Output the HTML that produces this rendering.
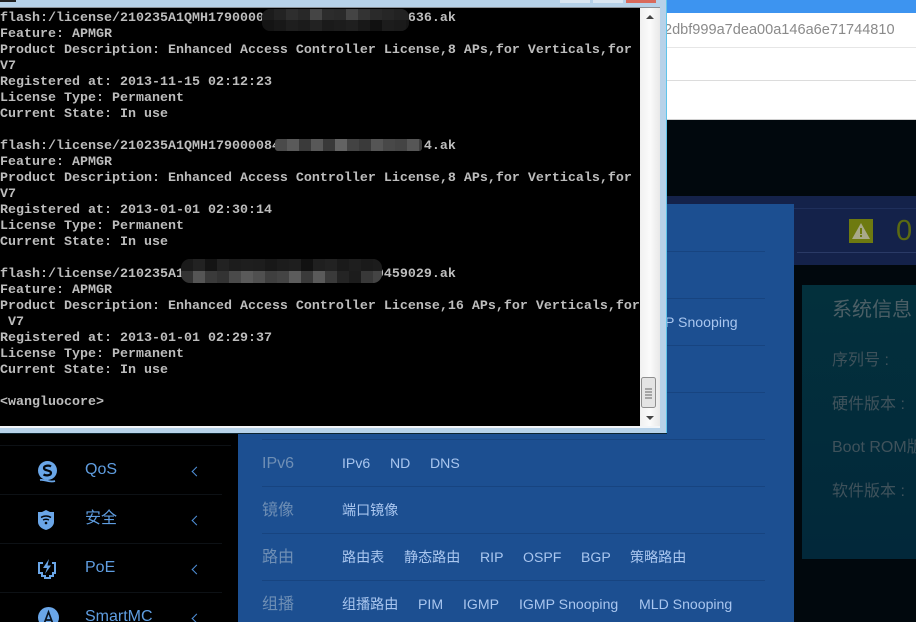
<!DOCTYPE html>
<html><head><meta charset="utf-8"><style>
html,body{margin:0;padding:0;width:916px;height:622px;overflow:hidden;background:#000}
body{position:relative;font-family:"Liberation Sans","Noto Sans CJK SC",sans-serif}
.a{position:absolute}
.t{position:absolute;white-space:pre;line-height:16px;height:16px}
#term .t{left:0;font:bold 13.33px/16px "Liberation Mono",monospace;color:#bdbdbd;letter-spacing:0}
.ln{position:absolute;left:262px;width:503px;height:1px;background:#174480}
.h{position:absolute;left:262px;font-size:16px;color:#6f8fb5;line-height:20px;white-space:pre}
.l{position:absolute;font-size:14.1px;color:#a9c6ef;line-height:20px;white-space:pre}
.m{position:absolute;left:85px;font-size:16px;color:#5f9de0;line-height:20px;white-space:pre}
.c{position:absolute;left:193px;width:6px;height:6px;border-left:1.5px solid #4f8fd8;border-bottom:1.5px solid #4f8fd8;transform:rotate(45deg)}
.s{position:absolute;left:0;width:222px;height:1px;background:#0d1115}
.g{position:absolute;left:832px;font-size:16px;color:#3f525b;line-height:20px;white-space:pre}
.r{position:absolute;display:flex;height:11px}
.r i{display:block;width:12px;height:11px;flex:none}
</style></head><body>

<!-- page behind -->
<div class="a" style="left:667px;top:0;width:249px;height:13px;background:#3d94f0"></div>
<div class="a" style="left:667px;top:13px;width:249px;height:107px;background:#fff"></div>
<div class="a" style="left:667px;top:47px;width:249px;height:1px;background:#e6e6e6"></div>
<div class="a" style="left:667px;top:80px;width:249px;height:1px;background:#dcdcdc"></div>
<div class="a" style="left:667px;top:119px;width:249px;height:1px;background:#d0d0d0"></div>
<div class="a" style="left:664px;top:20px;width:252px;height:20px;overflow:hidden;font-size:14.55px;line-height:20px;color:#8a8a8a;white-space:pre">2dbf999a7dea00a146a6e71744810</div>
<div class="a" style="left:667px;top:120px;width:249px;height:502px;background:#01080d"></div>

<!-- header band -->
<div class="a" style="left:667px;top:196px;width:249px;height:69px;background:#14224a"></div>
<div class="a" style="left:794px;top:208px;width:122px;height:1px;background:#1f2f5b"></div>
<div class="a" style="left:797px;top:252px;width:119px;height:1px;background:#2a3a66"></div>
<div class="a" style="left:849px;top:219px;width:24px;height:24px;background:#6e7a10"></div>
<svg class="a" style="left:849px;top:219px" width="24" height="24" viewBox="0 0 24 24"><path d="M12 4 L21 20 L3 20 Z" fill="#a9a98a"/><rect x="11" y="9" width="2" height="6" fill="#6e7a10"/><rect x="11" y="16" width="2" height="2" fill="#6e7a10"/></svg>
<div class="a" style="left:896px;top:214px;font-size:29px;line-height:34px;color:#5b6a12">0</div>

<!-- blue panel -->
<div class="a" style="left:238px;top:204px;width:556px;height:418px;background:#1c4f91"></div>
<div class="ln" style="top:251px"></div>
<div class="ln" style="top:298px"></div>
<div class="ln" style="top:345px"></div>
<div class="ln" style="top:392px"></div>
<div class="ln" style="top:439px"></div>
<div class="ln" style="top:486px"></div>
<div class="ln" style="top:533px"></div>
<div class="ln" style="top:580px"></div>
<div class="l" style="left:665px;top:312px">P Snooping</div>
<div class="h" style="top:454px">IPv6</div>
<div class="h" style="top:501px">镜像</div>
<div class="h" style="top:548px">路由</div>
<div class="h" style="top:595px">组播</div>
<div class="l" style="left:342px;top:453px">IPv6</div>
<div class="l" style="left:390px;top:453px">ND</div>
<div class="l" style="left:430px;top:453px">DNS</div>
<div class="l" style="left:342px;top:500px">端口镜像</div>
<div class="l" style="left:342px;top:547px">路由表</div>
<div class="l" style="left:404px;top:547px">静态路由</div>
<div class="l" style="left:480px;top:547px">RIP</div>
<div class="l" style="left:523px;top:547px">OSPF</div>
<div class="l" style="left:581px;top:547px">BGP</div>
<div class="l" style="left:630px;top:547px">策略路由</div>
<div class="l" style="left:342px;top:594px">组播路由</div>
<div class="l" style="left:418px;top:594px">PIM</div>
<div class="l" style="left:463px;top:594px">IGMP</div>
<div class="l" style="left:519px;top:594px">IGMP Snooping</div>
<div class="l" style="left:639px;top:594px">MLD Snooping</div>

<!-- system info card -->
<div class="a" style="left:802px;top:285px;width:114px;height:274px;background:linear-gradient(#03303c,#02283a)"></div>
<div class="a" style="left:832px;top:298px;font-size:20px;line-height:24px;color:#4c5f66;white-space:pre">系统信息</div>
<div class="g" style="top:351px">序列号 :</div>
<div class="g" style="top:395px">硬件版本 :</div>
<div class="g" style="top:438px">Boot ROM版</div>
<div class="g" style="top:482px">软件版本 :</div>

<!-- sidebar -->
<div class="a" style="left:0;top:433px;width:238px;height:189px;background:#000"></div>
<div class="s" style="top:445px;width:231px"></div>
<div class="s" style="top:494px"></div>
<div class="s" style="top:543px"></div>
<div class="s" style="top:592px"></div>
<svg class="a" style="left:36px;top:460px" width="24" height="24" viewBox="0 0 24 24"><circle cx="11.500" cy="10.500" r="9.500" fill="#6aa6e8"/><path d="M15 6.500 C13 5 8 5.500 8 8 C8 11 15 10 15 13 C15 15.500 10 16 7.500 14.500" fill="none" stroke="#03070c" stroke-width="2.200"/><path d="M4 20 C9 19 13 23 19 21" fill="none" stroke="#6aa6e8" stroke-width="1.800"/></svg>
<div class="m" style="top:460px">QoS</div><div class="c" style="top:468px"></div>
<svg class="a" style="left:37px;top:509px" width="18" height="22" viewBox="0 0 18 22"><path d="M1 3 L5 3 L9 1 L13 3 L17 3 L17 13 C17 17 13 20 9 21 C5 20 1 17 1 13 Z" fill="#6aa6e8"/><path d="M4 8.500 C7 6.500 11 6.500 14 8.500 M6 11 C8 10 10 10 12 11" fill="none" stroke="#03070c" stroke-width="1.400"/><circle cx="9" cy="14" r="1.300" fill="#03070c"/></svg>
<div class="m" style="top:509px">安全</div><div class="c" style="top:517px"></div>
<svg class="a" style="left:37px;top:558px" width="20" height="22" viewBox="0 0 20 22"><path d="M6 5 H2 V15 L5 15 L5 18 L8 18 L8 20 H13 V18 H16 V15 H18 V5 H15" fill="none" stroke="#6aa6e8" stroke-width="2"/><path d="M12 1 L6 10 H10 L8 16 L14 7.500 H10.500 Z" fill="#6aa6e8"/></svg>
<div class="m" style="top:558px">PoE</div><div class="c" style="top:566px"></div>
<svg class="a" style="left:38px;top:607px" width="22" height="22" viewBox="0 0 22 22"><circle cx="10.500" cy="10.500" r="10.500" fill="#6aa6e8"/><path d="M6 17 L10.500 5 L15 17 M7.500 13 H13.500" fill="none" stroke="#0a1420" stroke-width="1.700"/></svg>
<div class="m" style="top:607px">SmartMC</div><div class="c" style="top:615px"></div>

<!-- window frame -->
<div class="a" style="left:0;top:0;width:666px;height:434px;background:#b7d2e9"></div>
<div class="a" style="left:0;top:0;width:16px;height:2px;background:#222"></div>
<div class="a" style="left:560px;top:0;width:30px;height:3px;background:#dbe7f2"></div>
<div class="a" style="left:593px;top:0;width:30px;height:3px;background:#dbe7f2"></div>
<div class="a" style="left:626px;top:0;width:30px;height:3px;background:#d96a5c"></div>
<div class="a" style="left:666px;top:0;width:1px;height:434px;background:#5fc4ea"></div>
<div class="a" style="left:0;top:433px;width:667px;height:1px;background:#0c2430"></div>
<div class="a" style="left:0;top:7px;width:660px;height:1px;background:#8c9298"></div>
<div class="a" style="left:0;top:426px;width:660px;height:2px;background:#f2f5f8"></div>

<!-- terminal -->
<div id="term" class="a" style="left:0;top:8px;width:640px;height:418px;background:#000;overflow:hidden">
<div class="t" style="top:3px">flash:/license/210235A1QMH17900000                 636.ak</div>
<div class="t" style="top:19px">Feature: APMGR</div>
<div class="t" style="top:35px">Product Description: Enhanced Access Controller License,8 APs,for Verticals,for</div>
<div class="t" style="top:51px">V7</div>
<div class="t" style="top:67px">Registered at: 2013-11-15 02:12:23</div>
<div class="t" style="top:83px">License Type: Permanent</div>
<div class="t" style="top:99px">Current State: In use</div>
<div class="t" style="top:131px">flash:/license/210235A1QMH179000084                  4.ak</div>
<div class="t" style="top:147px">Feature: APMGR</div>
<div class="t" style="top:163px">Product Description: Enhanced Access Controller License,8 APs,for Verticals,for</div>
<div class="t" style="top:179px">V7</div>
<div class="t" style="top:195px">Registered at: 2013-01-01 02:30:14</div>
<div class="t" style="top:211px">License Type: Permanent</div>
<div class="t" style="top:227px">Current State: In use</div>
<div class="t" style="top:259px">flash:/license/210235A1                        0459029.ak</div>
<div class="t" style="top:275px">Feature: APMGR</div>
<div class="t" style="top:291px">Product Description: Enhanced Access Controller License,16 APs,for Verticals,for</div>
<div class="t" style="top:307px"> V7</div>
<div class="t" style="top:323px">Registered at: 2013-01-01 02:29:37</div>
<div class="t" style="top:339px">License Type: Permanent</div>
<div class="t" style="top:355px">Current State: In use</div>
<div class="t" style="top:387px">&lt;wangluocore&gt;</div>
</div>

<!-- mosaics -->
<div class="a" style="left:262px;top:9px;width:147px;height:22px;border-radius:8px;overflow:hidden;background:#111">
<div class="r" style="left:0;top:0"><i style="background:#1c1c1c"></i><i style="background:#232323"></i><i style="background:#2e2e2e"></i><i style="background:#282828"></i><i style="background:#454545"></i><i style="background:#2c2c2c"></i><i style="background:#2a2a2a"></i><i style="background:#444"></i><i style="background:#333"></i><i style="background:#2a2a2a"></i><i style="background:#262626"></i><i style="background:#222"></i><i style="background:#222"></i></div>
<div class="r" style="left:0;top:11px"><i style="background:#141414"></i><i style="background:#181818"></i><i style="background:#1e1e1e"></i><i style="background:#1b1b1b"></i><i style="background:#222"></i><i style="background:#1a1a1a"></i><i style="background:#1c1c1c"></i><i style="background:#1f1f1f"></i><i style="background:#181818"></i><i style="background:#111"></i><i style="background:#1c1c1c"></i><i style="background:#1a1a1a"></i><i style="background:#161616"></i></div>
</div>
<div class="a" style="left:275px;top:139px;width:147px;height:12px;border-radius:3px;overflow:hidden;background:#333">
<div class="r" style="left:0;top:0;height:12px"><i style="background:#4a4a4a;height:12px"></i><i style="background:#5a5a5a;height:12px"></i><i style="background:#3a3a3a;height:12px"></i><i style="background:#585858;height:12px"></i><i style="background:#393939;height:12px"></i><i style="background:#636363;height:12px"></i><i style="background:#434343;height:12px"></i><i style="background:#3a3a3a;height:12px"></i><i style="background:#555;height:12px"></i><i style="background:#484848;height:12px"></i><i style="background:#444;height:12px"></i><i style="background:#565656;height:12px"></i><i style="background:#3d3d3d;height:12px"></i></div>
</div>
<div class="a" style="left:181px;top:259px;width:201px;height:24px;border-radius:9px;overflow:hidden;background:#111">
<div class="r" style="left:0;top:0;height:12px"><i style="background:#1a1a1a;height:12px"></i><i style="background:#222;height:12px"></i><i style="background:#141414;height:12px"></i><i style="background:#222;height:12px"></i><i style="background:#1c1c1c;height:12px"></i><i style="background:#1e1e1e;height:12px"></i><i style="background:#1d1d1d;height:12px"></i><i style="background:#181818;height:12px"></i><i style="background:#1c1c1c;height:12px"></i><i style="background:#1e1e1e;height:12px"></i><i style="background:#111;height:12px"></i><i style="background:#1f1f1f;height:12px"></i><i style="background:#222;height:12px"></i><i style="background:#1a1a1a;height:12px"></i><i style="background:#1e1e1e;height:12px"></i><i style="background:#1a1a1a;height:12px"></i><i style="background:#1c1c1c;height:12px"></i></div>
<div class="r" style="left:0;top:12px;height:12px"><i style="background:#333;height:12px"></i><i style="background:#555;height:12px"></i><i style="background:#3a3a3a;height:12px"></i><i style="background:#333;height:12px"></i><i style="background:#4a4a4a;height:12px"></i><i style="background:#5a5a5a;height:12px"></i><i style="background:#505050;height:12px"></i><i style="background:#3f3f3f;height:12px"></i><i style="background:#444;height:12px"></i><i style="background:#5c5c5c;height:12px"></i><i style="background:#3a3a3a;height:12px"></i><i style="background:#5a5a5a;height:12px"></i><i style="background:#3a3a3a;height:12px"></i><i style="background:#242424;height:12px"></i><i style="background:#1c1c1c;height:12px"></i><i style="background:#383838;height:12px"></i><i style="background:#444;height:12px"></i></div>
</div>

<!-- scrollbar -->
<div class="a" style="left:640px;top:8px;width:20px;height:418px;background:linear-gradient(90deg,#f0f0f0,#fbfbfb 50%,#e8e8e8)"></div>
<svg class="a" style="left:640px;top:8px" width="20" height="418" viewBox="0 0 20 418"><path d="M6 11 L10 7 L14 11 Z" fill="#444"/><path d="M6 408 L14 408 L10 412 Z" fill="#444"/><rect x="1.500" y="369.500" width="14" height="30" rx="2" fill="#e4e4e4" stroke="#8f8f8f"/><path d="M5 381H12M5 384H12M5 387H12M5 390H12" stroke="#666" stroke-width="1"/></svg>
<div class="a" style="left:660px;top:8px;width:6px;height:418px;background:#b7d2e9"></div>

</body></html>
